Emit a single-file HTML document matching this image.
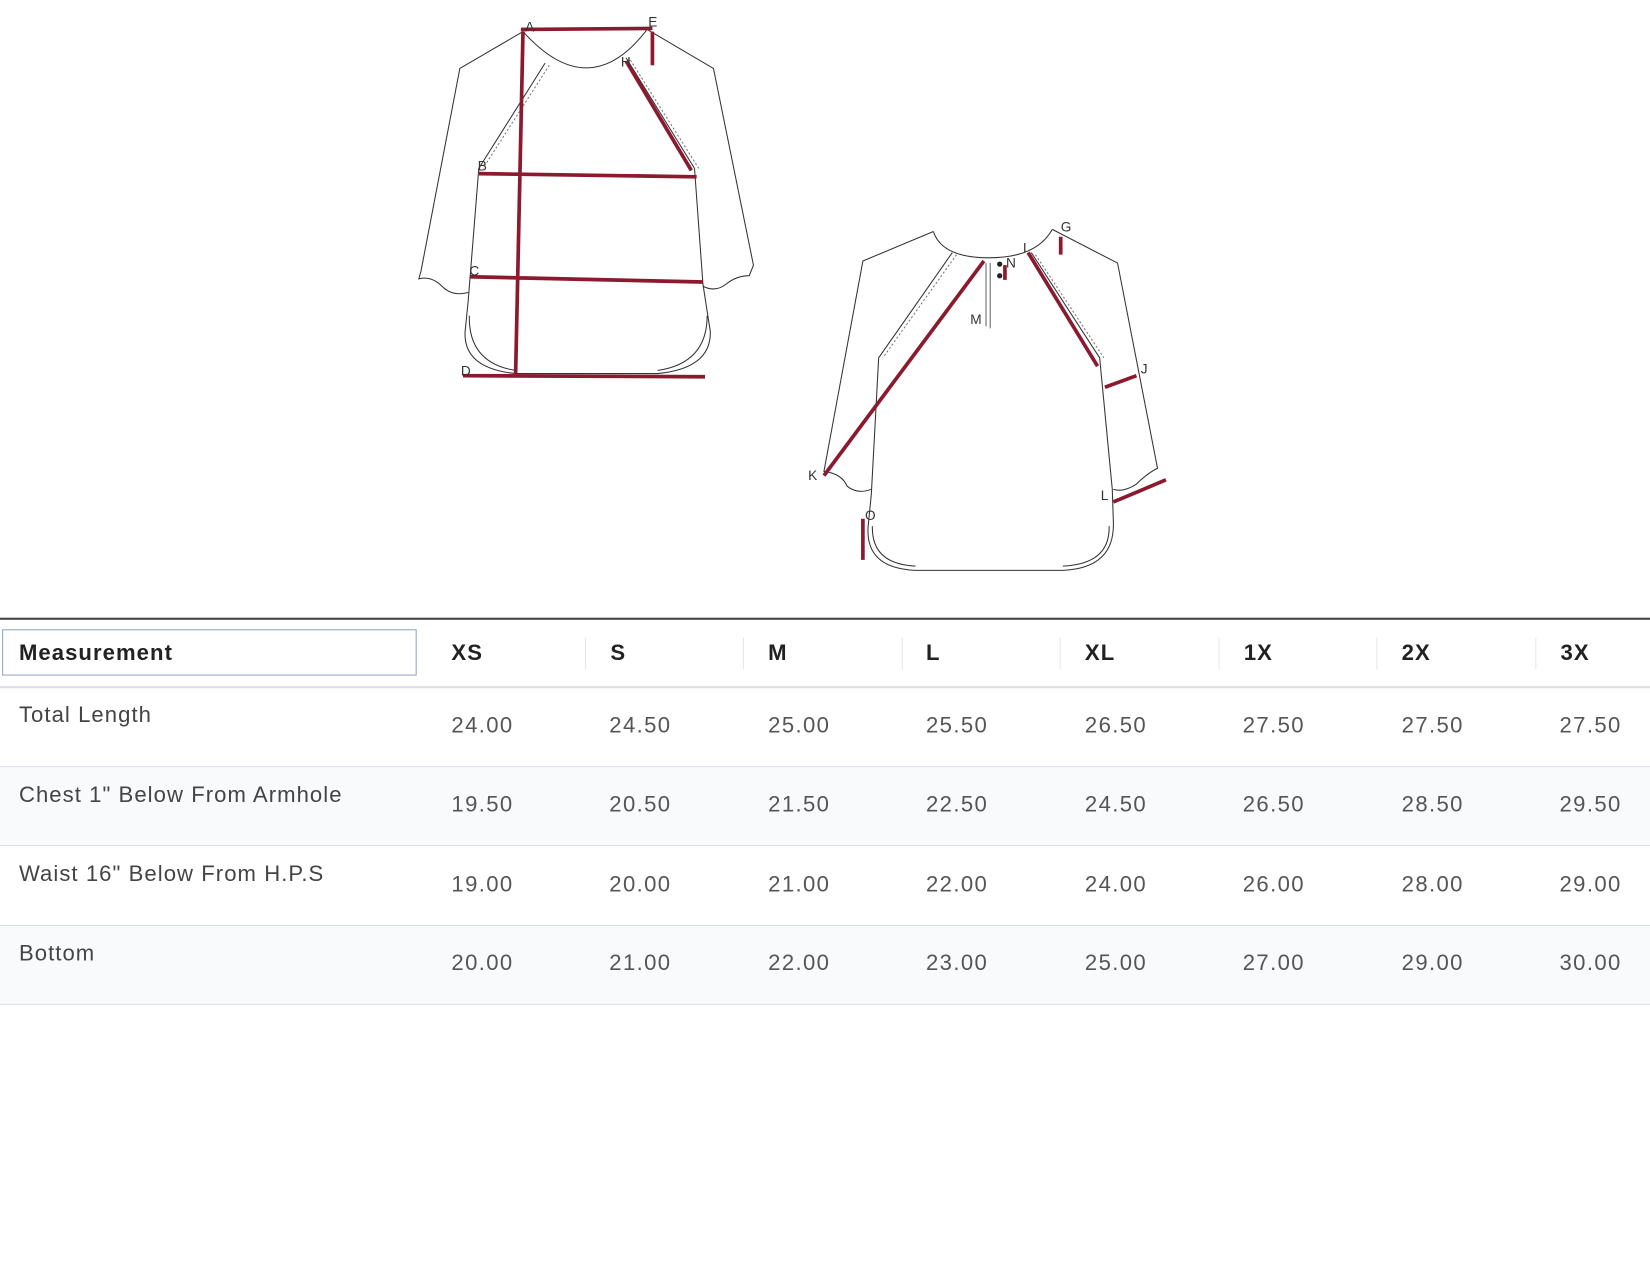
<!DOCTYPE html>
<html><head><meta charset="utf-8">
<style>
html,body{margin:0;padding:0;background:#fff;width:1650px;height:1275px;overflow:hidden}
#w{position:absolute;left:0;top:0;width:1568px;height:1212px;transform:scale(1.0523);transform-origin:0 0;font-family:"Liberation Sans",Arial,sans-serif}
.abs{position:absolute}
.topline{left:0;top:587px;width:1568px;height:2px;background:#444}
.hbox{left:2px;top:598px;width:394px;height:44px;border:1px solid #8fa6c6;box-sizing:border-box}
.h{top:609px;font-size:21px;color:#222;font-weight:bold;letter-spacing:1px}
.sep{top:606px;width:1px;height:30px;background:#e4e6ea}
.rowb{left:0;width:1568px;height:1px;background:#dcdfe4}
.alt{left:0;width:1568px;background:#f8fafc}
.lab{left:18px;font-size:21px;color:#444;letter-spacing:1px}
.v{font-size:21px;color:#555;letter-spacing:1.3px}
</style></head><body><div id="w">
<svg class="abs" style="left:0;top:0" width="1568" height="600" viewBox="0 0 1568 600">
<g fill="none" stroke="#333" stroke-width="1">
<path d="M497,30 Q560,100 615,28"/>
<path d="M497,30 L437,65 L400,258 L398,265 Q410,262 420,272 Q430,282 445,278"/>
<path d="M615,28 L678,65 L716,252 L712,262 Q700,262 690,270 Q680,278 668,272"/>
<path d="M518,60 L455,160 L445,285 L442,315 Q440,350 490,355 L625,355 Q676,350 675,315 L668,270 L660,160 L595,55"/>
<path d="M446,300 Q445,345 490,352 M672,300 Q672,345 625,352"/>
<path d="M522,62 L459,160 M599,57 L664,160" stroke="#777" stroke-dasharray="2 2"/>
<path d="M887,220 Q895,245 940,245 Q985,245 1000,218"/>
<path d="M887,220 L820,248 L783,448 Q800,450 805,462 Q815,470 828,465"/>
<path d="M1000,218 L1062,250 L1100,445 Q1090,450 1080,460 Q1068,468 1058,465"/>
<path d="M905,240 L835,340 L828,470 L825,500 Q822,540 870,542 L1010,542 Q1060,540 1058,495 L1057,465 L1045,340 L980,240"/>
<path d="M829,500 Q828,536 870,538 M1054,500 Q1055,536 1010,538"/>
<path d="M909,242 L839,340 M984,242 L1049,340" stroke="#777" stroke-dasharray="2 2"/>
<path d="M937,250 L937,310 M941,250 L941,312" stroke="#666"/>
</g>
<g stroke="#8b1a2e" stroke-width="3.5" fill="none">
<path d="M495,28 L620,27 M620,30 L620,62 M497,30 L490,355 M455,165 L662,168 M595,58 L657,162 M447,263 L668,268 M440,357 L670,358"/>
<path d="M783,452 L935,248 M1008,225 L1008,242 M977,240 L1043,348 M1050,368 L1080,357 M1058,477 L1108,456 M820,493 L820,532 M955,252 L955,266"/>
</g>
<circle cx="950" cy="251" r="2.5" fill="#222"/><circle cx="950" cy="262" r="2.5" fill="#222"/>
<g font-family="Liberation Sans,Arial,sans-serif" font-size="13" fill="#333">
<text x="499" y="30">A</text><text x="616" y="25">E</text><text x="590" y="63">H</text>
<text x="454" y="162">B</text><text x="446" y="262">C</text><text x="438" y="357">D</text>
<text x="1008" y="220">G</text><text x="972" y="240">I</text><text x="956" y="254">N</text>
<text x="922" y="308">M</text><text x="1084" y="355">J</text><text x="768" y="456">K</text>
<text x="1046" y="475">L</text><text x="822" y="494">O</text>
</g>
</svg>
<div class="abs topline"></div>
<div class="abs alt" style="top:729px;height:75px"></div>
<div class="abs alt" style="top:880px;height:74px"></div>
<div class="abs hbox"></div>
<div class="abs h" style="left:18px">Measurement</div>
<div class="abs h" style="left:429px">XS</div>
<div class="abs h" style="left:580px">S</div>
<div class="abs h" style="left:730px">M</div>
<div class="abs h" style="left:880px">L</div>
<div class="abs h" style="left:1031px">XL</div>
<div class="abs h" style="left:1182px">1X</div>
<div class="abs h" style="left:1332px">2X</div>
<div class="abs h" style="left:1483px">3X</div>
<div class="abs sep" style="left:556px"></div><div class="abs sep" style="left:706px"></div>
<div class="abs sep" style="left:857px"></div><div class="abs sep" style="left:1007px"></div>
<div class="abs sep" style="left:1158px"></div><div class="abs sep" style="left:1308px"></div>
<div class="abs sep" style="left:1459px"></div>
<div class="abs rowb" style="top:652px;height:2px"></div>
<div class="abs rowb" style="top:728px"></div>
<div class="abs rowb" style="top:803px"></div>
<div class="abs rowb" style="top:879px"></div>
<div class="abs rowb" style="top:954px"></div>

<div class="abs lab" style="top:668px">Total Length</div>
<div class="abs lab" style="top:744px">Chest 1" Below From Armhole</div>
<div class="abs lab" style="top:819px">Waist 16" Below From H.P.S</div>
<div class="abs lab" style="top:895px">Bottom</div>

<div class="abs v" style="top:678px;left:429px">24.00</div><div class="abs v" style="top:678px;left:579px">24.50</div><div class="abs v" style="top:678px;left:730px">25.00</div><div class="abs v" style="top:678px;left:880px">25.50</div><div class="abs v" style="top:678px;left:1031px">26.50</div><div class="abs v" style="top:678px;left:1181px">27.50</div><div class="abs v" style="top:678px;left:1332px">27.50</div><div class="abs v" style="top:678px;left:1482px">27.50</div>
<div class="abs v" style="top:753px;left:429px">19.50</div><div class="abs v" style="top:753px;left:579px">20.50</div><div class="abs v" style="top:753px;left:730px">21.50</div><div class="abs v" style="top:753px;left:880px">22.50</div><div class="abs v" style="top:753px;left:1031px">24.50</div><div class="abs v" style="top:753px;left:1181px">26.50</div><div class="abs v" style="top:753px;left:1332px">28.50</div><div class="abs v" style="top:753px;left:1482px">29.50</div>
<div class="abs v" style="top:829px;left:429px">19.00</div><div class="abs v" style="top:829px;left:579px">20.00</div><div class="abs v" style="top:829px;left:730px">21.00</div><div class="abs v" style="top:829px;left:880px">22.00</div><div class="abs v" style="top:829px;left:1031px">24.00</div><div class="abs v" style="top:829px;left:1181px">26.00</div><div class="abs v" style="top:829px;left:1332px">28.00</div><div class="abs v" style="top:829px;left:1482px">29.00</div>
<div class="abs v" style="top:904px;left:429px">20.00</div><div class="abs v" style="top:904px;left:579px">21.00</div><div class="abs v" style="top:904px;left:730px">22.00</div><div class="abs v" style="top:904px;left:880px">23.00</div><div class="abs v" style="top:904px;left:1031px">25.00</div><div class="abs v" style="top:904px;left:1181px">27.00</div><div class="abs v" style="top:904px;left:1332px">29.00</div><div class="abs v" style="top:904px;left:1482px">30.00</div>
</div></body></html>
